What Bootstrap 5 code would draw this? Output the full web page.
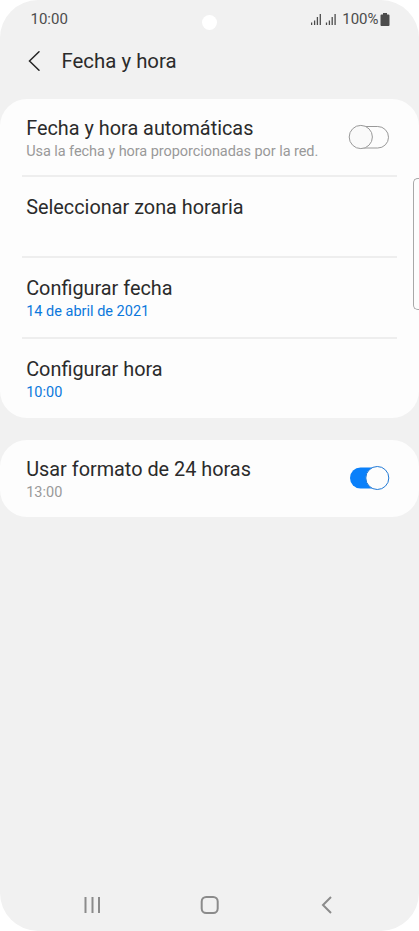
<!DOCTYPE html>
<html lang="es">
<head>
<meta charset="utf-8">
<meta name="viewport" content="width=device-width, initial-scale=1">
<title>Fecha y hora</title>
<link href="https://cdn.jsdelivr.net/npm/bootstrap@5.3.0/dist/css/bootstrap.min.css" rel="stylesheet">
<style>
body { background: #fff; font-family: Roboto, "Liberation Sans", sans-serif; color: #2b2b2b; overflow: hidden; }
.screen { height: 931px; background: #f1f1f1; border-radius: 38px; }
.statusbar { height: 37px; padding: 1px 29.5px 0 30.5px; font-size: 15px; line-height: 36px; color: #4c4c4c; }
.battery-text { margin-left: 4px; margin-right: 1px; }
.camera { width: 15px; height: 15px; background: #fff; top: 15px; left: 202px; }
.appbar { height: 62px; padding: 0 28px 14px; }
.appbar h1 { font-size: 20.4px; line-height: 24px; margin-left: 20.5px; }
.panel { background: #fdfdfd; border-radius: 27px; padding: 0 22px; border: 0; }
.panel + .panel { margin-top: 22px; }
.setting { height: 81px; padding: 18px 4.2px 0; border-bottom: 2px solid #eee; }
.setting:first-child { height: 78px; padding-top: 17px; }
.setting:last-child { border-bottom: 0; }
.first-panel { height: 319px; }
.second-panel { height: 76.5px; }
.second-panel .setting { padding-top: 17px; }
.setting-name { font-size: 19.85px; line-height: 26px; white-space: nowrap; }
.setting-note { font-size: 14.5px; line-height: 20px; white-space: nowrap; color: #999; }
.setting-note.long { letter-spacing: -.065px; }
.setting-note.value { color: #0b78dc; }
.switch-off, .switch-on { margin: 8px 2.500px 0 0; }
.edge-handle { right: 0; top: 178px; width: 6px; height: 132px; border: 1px solid #a8a8a8; border-right: 0; border-radius: 5px 0 0 5px; background: #fdfdfd; }
.softkeys { height: 53px; padding: 0 82px; }
svg { display: block; flex: none; }
</style>
</head>
<body>
<div class="screen position-relative d-flex flex-column overflow-hidden">
  <div class="statusbar d-flex justify-content-between align-items-center">
    <span class="clock">10:00</span>
    <div class="d-flex align-items-center">
      <svg width="27" height="12" viewBox="0 0 27 12" stroke="#4c4c4c" stroke-width="1.300"><path d="M.6 9.500V12M3.600 7.500V12M6.400 4V12M9.300 1V12M15.500 9.500V12M18.400 7.500V12M21.200 4V12M24.100 1V12"/></svg>
      <span class="battery-text">100%</span>
      <svg class="battery" width="10" height="13" viewBox="0 0 10 13"><path d="M3 0h4v1.500h1.500q1 0 1 1V12q0 1-1 1h-7q-1 0-1-1V2.500q0-1 1-1H3z" fill="#4c4c4c"/></svg>
    </div>
    <div class="camera position-absolute rounded-circle"></div>
  </div>
  <header class="appbar d-flex align-items-center">
    <svg width="13" height="20" viewBox="0 0 13 20" fill="none" stroke="#252525" stroke-width="1.5" stroke-linecap="round"><path d="M11 .8 1.500 10 11 19.200"/></svg>
    <h1 class="fw-normal mb-0">Fecha y hora</h1>
  </header>
  <main>
    <section class="panel first-panel">
      <div class="setting d-flex justify-content-between align-items-start">
        <div>
          <div class="setting-name">Fecha y hora automáticas</div>
          <div class="setting-note long">Usa la fecha y hora proporcionadas por la red.</div>
        </div>
        <svg class="switch-off" width="42" height="26" viewBox="0 0 42 26" fill="#fdfdfd" stroke="#999"><rect x="3.500" y="2.500" width="37" height="21.500" rx="10.750"/><circle cx="12.800" cy="13" r="11.600" fill="#fafafa"/></svg>
      </div>
      <div class="setting"><div class="setting-name">Seleccionar zona horaria</div></div>
      <div class="setting">
        <div class="setting-name">Configurar fecha</div>
        <div class="setting-note value">14 de abril de 2021</div>
      </div>
      <div class="setting">
        <div class="setting-name">Configurar hora</div>
        <div class="setting-note value">10:00</div>
      </div>
    </section>
    <section class="panel second-panel">
      <div class="setting d-flex justify-content-between align-items-start border-0">
        <div>
          <div class="setting-name">Usar formato de 24 horas</div>
          <div class="setting-note">13:00</div>
        </div>
        <svg class="switch-on" width="42" height="26" viewBox="0 0 42 26"><rect x="2" y="2.500" width="38" height="21" rx="10.500" fill="#0a80fa"/><circle cx="29.300" cy="13" r="11.500" fill="#fdfdfd" stroke="#2179d5"/></svg>
      </div>
    </section>
  </main>
  <div class="edge-handle position-absolute"></div>
  <nav class="softkeys d-flex justify-content-between align-items-center mt-auto">
    <svg width="20" height="18" viewBox="0 0 20 18" stroke="#8b8b8b" stroke-width="2"><path d="M3.500 1V17M10.500 1V17M17 1V17"/></svg>
    <svg width="20" height="20" viewBox="0 0 20 20" fill="none" stroke="#8b8b8b" stroke-width="2"><rect x="1.700" y="2" width="16" height="16" rx="4.500"/></svg>
    <svg width="20" height="18" viewBox="0 0 20 18" fill="none" stroke="#8b8b8b" stroke-width="2"><path d="M14 1 6 9l8 8"/></svg>
  </nav>
</div>
<script src="https://cdn.jsdelivr.net/npm/bootstrap@5.3.0/dist/js/bootstrap.bundle.min.js"></script>
</body>
</html>
